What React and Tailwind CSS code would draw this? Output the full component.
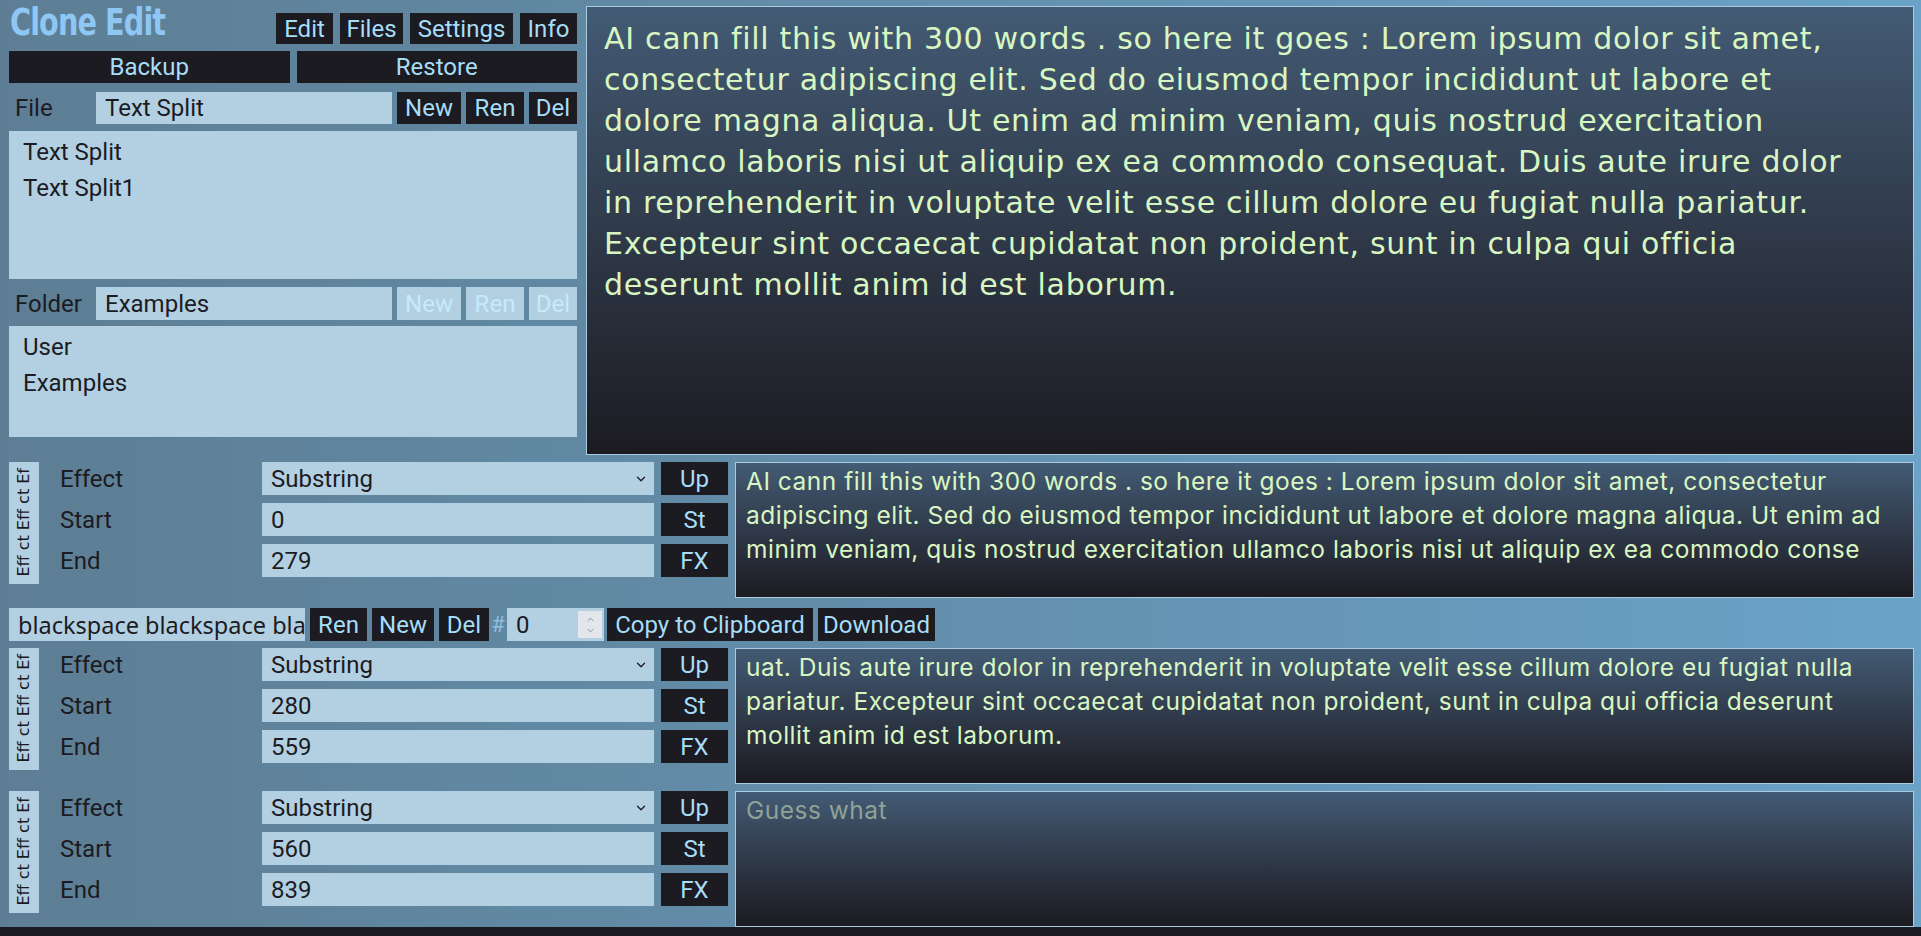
import { ChevronDown, ChevronUp } from 'lucide-react';

const bigLines = [
  'AI cann fill this with 300 words . so here it goes : Lorem ipsum dolor sit amet,',
  'consectetur adipiscing elit. Sed do eiusmod tempor incididunt ut labore et',
  'dolore magna aliqua. Ut enim ad minim veniam, quis nostrud exercitation',
  'ullamco laboris nisi ut aliquip ex ea commodo consequat. Duis aute irure dolor',
  'in reprehenderit in voluptate velit esse cillum dolore eu fugiat nulla pariatur.',
  'Excepteur sint occaecat cupidatat non proident, sunt in culpa qui officia',
  'deserunt mollit anim id est laborum.',
];

const sections = [
  {
    start: '0',
    end: '279',
    lines: [
      'AI cann fill this with 300 words . so here it goes : Lorem ipsum dolor sit amet, consectetur',
      'adipiscing elit. Sed do eiusmod tempor incididunt ut labore et dolore magna aliqua. Ut enim ad',
      'minim veniam, quis nostrud exercitation ullamco laboris nisi ut aliquip ex ea commodo conse',
    ],
  },
  {
    start: '280',
    end: '559',
    lines: [
      'uat. Duis aute irure dolor in reprehenderit in voluptate velit esse cillum dolore eu fugiat nulla',
      'pariatur. Excepteur sint occaecat cupidatat non proident, sunt in culpa qui officia deserunt',
      'mollit anim id est laborum.',
    ],
  },
  { start: '560', end: '839', lines: [] },
];

function Btn({ children, className = '', disabled = false }) {
  return (
    <button
      className={`h-full flex items-center justify-center text-[24px] leading-none px-[6px] shrink-0 ${
        disabled ? 'bg-[#b3d0e2] text-[#c6eafc]' : 'bg-[#1c1b22] text-[#a6ddf7]'
      } ${className}`}
    >
      {children}
    </button>
  );
}

function Field({ children, className = '' }) {
  return (
    <div className={`h-full bg-[#b3d0e2] text-[#1c1b22] text-[24px] flex items-center px-[9px] ${className}`}>
      {children}
    </div>
  );
}

function EffectSection({ section }) {
  return (
    <div className="flex h-[136px] gap-[7px]">
      <div className="w-[719px] flex shrink-0">
        {/* vertical tab */}
        <div className="w-[30px] h-[122px] bg-[#b3d0e2] overflow-hidden flex flex-col justify-end items-center pb-[8px] shrink-0">
          <div className="[writing-mode:vertical-rl] rotate-180 whitespace-nowrap text-[16px] text-[#1c1b22] font-['DejaVu_Sans',sans-serif] leading-none">
            Eff ct Eff ct Ef
          </div>
        </div>
        <div className="flex flex-col gap-[8px] ml-[21px] flex-1">
          {[
            ['Effect', 'Substring', 'Up', true],
            ['Start', section.start, 'St', false],
            ['End', section.end, 'FX', false],
          ].map(([label, value, btn, isSelect]) => (
            <div key={label} className="flex h-[33px] items-center">
              <div className="w-[202px] text-[24px] text-[#1c1b22]">{label}</div>
              <Field className="w-[392px] justify-between">
                <span>{value}</span>
                {isSelect && <ChevronDown size={14} strokeWidth={2.2} className="mr-[-3px]" />}
              </Field>
              <Btn className="w-[67px] ml-[7px]">{btn}</Btn>
            </div>
          ))}
        </div>
      </div>
      <div className="flex-1 mr-[7px] border border-[#a9cbe0] bg-linear-to-b from-[#435b75] to-[#1c1b22] px-[10px] pt-[1px] font-['Inter',sans-serif] text-[24.5px] tracking-[0.5px] leading-[34px] text-[#d9f6c2] overflow-hidden">
        {section.lines.length ? (
          section.lines.map((l) => (
            <div key={l} className="whitespace-nowrap">
              {l}
            </div>
          ))
        ) : (
          <div className="text-[#8ea397]">Guess what</div>
        )}
      </div>
    </div>
  );
}

export default function App() {
  return (
    <div className="w-[1921px] h-[936px] bg-[#1c1b22] overflow-hidden font-['Roboto',sans-serif]">
      <div className="h-[927px] bg-linear-to-r from-[#5d7e94] to-[#6aa2c8] pt-[6px] pl-[9px] flex flex-col">
        {/* Top area */}
        <div className="flex h-[450px] gap-[9px]">
          <div className="w-[568px] flex flex-col shrink-0">
            <div className="flex justify-between h-[38px]">
              <div className="font-['DejaVu_Sans_Condensed',sans-serif] font-bold text-[37px] leading-[34px] tracking-[-1px] text-[#8ec7f3] ml-[1px] scale-x-[0.86] origin-left whitespace-nowrap">
                Clone Edit
              </div>
              <div className="flex gap-[7px] h-[31px] self-end">
                <Btn className="w-[57px]">Edit</Btn>
                <Btn className="w-[63px]">Files</Btn>
                <Btn className="w-[103px]">Settings</Btn>
                <Btn className="w-[57px]">Info</Btn>
              </div>
            </div>
            <div className="flex gap-[7px] h-[32px] mt-[7px]">
              <Btn className="flex-1">Backup</Btn>
              <Btn className="flex-1">Restore</Btn>
            </div>
            <div className="flex h-[32px] mt-[9px] items-center">
              <div className="w-[87px] pl-[6px] text-[24px] text-[#1c1b22]">File</div>
              <Field className="w-[296px]">Text Split</Field>
              <div className="flex gap-[5px] h-full ml-[5px]">
                <Btn className="w-[64px]">New</Btn>
                <Btn className="w-[58px]">Ren</Btn>
                <Btn className="w-[48px]">Del</Btn>
              </div>
            </div>
            <div className="h-[148px] mt-[7px] bg-[#b3d0e2] text-[#1c1b22] text-[24px] leading-[36px] px-[14px] pt-[3px]">
              <div>Text Split</div>
              <div>Text Split1</div>
            </div>
            <div className="flex h-[33px] mt-[8px] items-center">
              <div className="w-[87px] pl-[6px] text-[24px] text-[#1c1b22]">Folder</div>
              <Field className="w-[296px]">Examples</Field>
              <div className="flex gap-[5px] h-full ml-[5px]">
                <Btn disabled className="w-[64px]">New</Btn>
                <Btn disabled className="w-[58px]">Ren</Btn>
                <Btn disabled className="w-[48px]">Del</Btn>
              </div>
            </div>
            <div className="h-[111px] mt-[6px] bg-[#b3d0e2] text-[#1c1b22] text-[24px] leading-[36px] px-[14px] pt-[3px]">
              <div>User</div>
              <div>Examples</div>
            </div>
          </div>
          <div className="flex-1 mr-[7px] border border-[#a9cbe0] bg-linear-to-b from-[#435b75] to-[#1c1b22] pl-[17px] pt-[11px] font-['DejaVu_Sans',sans-serif] text-[30px] tracking-[0.7px] leading-[41px] text-[#d9f6c2] overflow-hidden">
            {bigLines.map((l) => (
              <div key={l} className="whitespace-nowrap">
                {l}
              </div>
            ))}
          </div>
        </div>

        <div className="mt-[7px]">
          <EffectSection section={sections[0]} />
        </div>

        {/* Toolbar */}
        <div className="flex h-[33px] mt-[10px] items-center">
          <input
            readOnly
            value="blackspace blackspace blackspace"
            className="w-[296px] h-full bg-[#b3d0e2] text-[#1c1b22] text-[23.5px] font-['Noto_Sans',sans-serif] pl-[9px] outline-none"
          />
          <div className="flex h-full gap-[5px] ml-[5px]">
            <Btn className="w-[57px]">Ren</Btn>
            <Btn className="w-[62px]">New</Btn>
            <Btn className="w-[50px]">Del</Btn>
          </div>
          <div className="w-[18px] text-center text-[22px] text-[#8fbfdf]">#</div>
          <div className="w-[97px] h-full bg-[#b3d0e2] flex items-center justify-between pl-[9px] pr-[2px] text-[24px] text-[#1c1b22]">
            <span>0</span>
            <div className="w-[24px] h-[27px] bg-[#e3e6ea] flex flex-col items-center justify-center text-[#8b8f96]">
              <ChevronUp size={11} strokeWidth={2} />
              <ChevronDown size={11} strokeWidth={2} />
            </div>
          </div>
          <div className="flex h-full gap-[5px] ml-[3px]">
            <Btn className="w-[206px]">Copy to Clipboard</Btn>
            <Btn className="w-[117px]">Download</Btn>
          </div>
        </div>

        <div className="mt-[7px]">
          <EffectSection section={sections[1]} />
        </div>
        <div className="mt-[7px]">
          <EffectSection section={sections[2]} />
        </div>
      </div>
    </div>
  );
}
